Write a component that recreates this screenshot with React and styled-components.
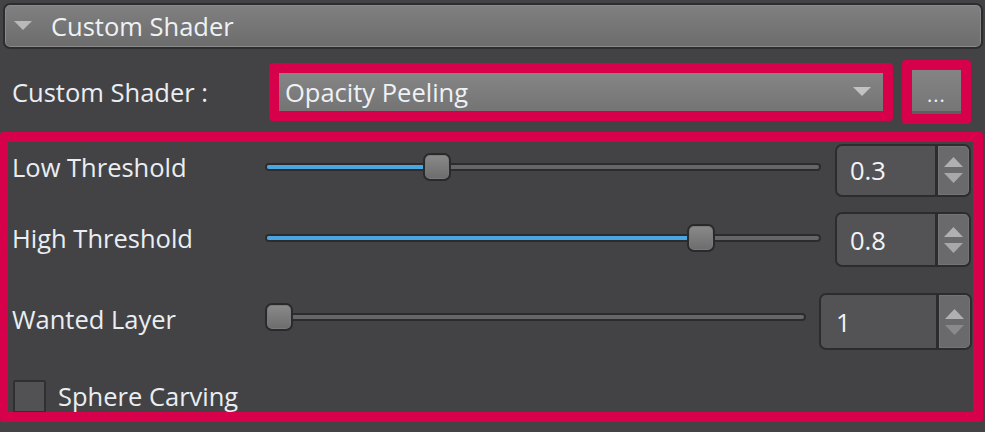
import React from "react";
import styled, { createGlobalStyle } from "styled-components";

const Global = createGlobalStyle`
  html, body { margin: 0; padding: 0; background: #434345; }
  body { width: 985px; height: 432px; overflow: hidden; font-family: "Open Sans", "Noto Sans", sans-serif; }
`;

const Page = styled.div`
  width: 985px;
  height: 432px;
  background: #434345;
  display: flex;
  flex-direction: column;
  box-sizing: border-box;
  padding-top: 3px;
`;

const Header = styled.div`
  margin: 0 2px 0 3px;
  height: 46px;
  box-sizing: border-box;
  border: 2px solid #2d2d2f;
  border-radius: 7px;
  background: linear-gradient(#808080, #6c6c6c);
  box-shadow: inset 0 0 0 1px #8a8a8a;
  display: flex;
  align-items: center;
  padding-left: 9px;
  gap: 19px;
  color: #eef2f6;
  font-size: 25.5px;
`;

const Caret = styled.svg`
  width: 18px;
  height: 10px;
  flex: none;
`;

const ShaderRow = styled.div`
  display: flex;
  align-items: center;
  margin-top: 10px;
  height: 65px;
`;

const Label = styled.div`
  box-sizing: border-box;
  color: #eaeef2;
  font-size: 25.5px;
  white-space: nowrap;
  width: ${(p) => p.$w || "auto"};
  padding-left: ${(p) => p.$pl || 0}px;
  margin-bottom: ${(p) => p.$lift || 0}px;
  flex: none;
`;

const Highlight = styled.div`
  border: 10px solid #d7004b;
  border-radius: 4px;
  display: flex;
  flex: none;
  margin-left: ${(p) => p.$ml || 0}px;
`;

const Combo = styled.div`
  width: 604px;
  height: 38px;
  box-sizing: border-box;
  background: linear-gradient(#858585, #747474);
  display: flex;
  align-items: center;
  justify-content: space-between;
  padding: 0 12px 0 6px;
  color: #eef2f6;
  font-size: 25.5px;
`;

const MoreBtn = styled.div`
  width: 49px;
  height: 44px;
  box-sizing: border-box;
  background: linear-gradient(#848484, #767676);
  border-bottom: 3px solid #5e5e5e;
  display: flex;
  align-items: flex-end;
  justify-content: center;
  padding-bottom: 3px;
  color: #eef2f6;
  font-size: 20px;
  letter-spacing: 1px;
`;

const Group = styled.div`
  margin-top: 8px;
  width: 983px;
  height: 290px;
  box-sizing: border-box;
  border: 10px solid #d7004b;
  border-left-width: 8px;
  border-radius: 3px;
  display: flex;
  flex-direction: column;
  padding: 0 3px 0 4px;
  overflow: hidden;
`;

const ParamRow = styled.div`
  display: flex;
  align-items: center;
  height: ${(p) => p.$h}px;
  flex: none;
`;

const SliderWrap = styled.div`
  position: relative;
  width: ${(p) => p.$w}px;
  height: 28px;
  flex: none;
  margin-right: ${(p) => p.$gap}px;
  margin-bottom: ${(p) => p.$lift || 0}px;
`;

const Track = styled.div`
  position: absolute;
  left: 0;
  right: 0;
  top: 10px;
  height: 8px;
  box-sizing: border-box;
  border: 2px solid #2c2c2e;
  border-radius: 4px;
  background: #666668;
  overflow: hidden;
`;

const Fill = styled.div`
  height: 100%;
  background: #4aa6e0;
`;

const Handle = styled.div`
  position: absolute;
  top: 0;
  width: 28px;
  height: 28px;
  box-sizing: border-box;
  border: 2px solid #2a2a2c;
  border-radius: 7px;
  background: linear-gradient(#8a8a8a, #6c6c6c);
  box-shadow: inset 0 0 0 1px #7a7a7a;
`;

const Spin = styled.div`
  width: ${(p) => p.$w}px;
  height: ${(p) => p.$h}px;
  box-sizing: border-box;
  border: 2px solid #2c2c2e;
  border-radius: 7px;
  background: #535355;
  display: flex;
  overflow: hidden;
  flex: none;
`;

const SpinValue = styled.div`
  flex: 1;
  display: flex;
  align-items: center;
  padding-left: ${(p) => p.$pl}px;
  color: #f2f4f8;
  font-size: 25.5px;
  border-right: 3px solid #2c2c2e;
`;

const SpinButtons = styled.div`
  width: 31px;
  background: #6a6a6c;
  border-radius: 0 5px 5px 0;
  box-shadow: inset 0 0 0 1px #747476;
  display: flex;
  flex-direction: column;
  align-items: center;
  justify-content: center;
  gap: 6px;
`;

const Arrow = styled.svg`
  width: 19px;
  height: 10px;
  display: block;
`;

const CheckRow = styled.div`
  display: flex;
  align-items: flex-start;
  gap: 12px;
  padding-top: 18px;
  padding-left: 1px;
`;

const Box = styled.div`
  width: 33px;
  height: 33px;
  box-sizing: border-box;
  border: 2px solid #303032;
  border-radius: 2px;
  background: #525254;
  flex: none;
`;

const CheckLabel = styled(Label)`
  margin-top: -1px;
`;

function Slider({ width, value, gap, lift }) {
  const left = value * (width - 28);
  return (
    <SliderWrap $w={width} $gap={gap} $lift={lift}>
      <Track>
        <Fill style={{ width: `${left + 14}px` }} />
      </Track>
      <Handle style={{ left: `${left}px` }} />
    </SliderWrap>
  );
}

function SpinBox({ value, w, h, pl, disabled }) {
  const arrowColor = disabled ? "#8a8a8a" : "#a8a8aa";
  return (
    <Spin $w={w} $h={h}>
      <SpinValue $pl={pl}>{value}</SpinValue>
      <SpinButtons>
        <Arrow viewBox="0 0 19 10">
          <polygon points="9.5,0 19,10 0,10" fill="#b0b0b2" />
        </Arrow>
        <Arrow viewBox="0 0 19 10">
          <polygon points="0,0 19,0 9.5,10" fill={arrowColor} />
        </Arrow>
      </SpinButtons>
    </Spin>
  );
}

export default function App() {
  return (
    <Page>
      <Global />
      <Header>
        <Caret viewBox="0 0 18 10">
          <polygon points="0,0 18,0 9,9" fill="#b9b9b9" />
        </Caret>
        Custom Shader
      </Header>
      <ShaderRow>
        <Label $w="269px" $pl={12}>Custom Shader :</Label>
        <Highlight>
          <Combo>
            Opacity Peeling
            <Caret viewBox="0 0 18 10">
              <polygon points="0,0 18,0 9,9" fill="#c2c2c2" />
            </Caret>
          </Combo>
        </Highlight>
        <Highlight $ml={9}>
          <MoreBtn>...</MoreBtn>
        </Highlight>
      </ShaderRow>
      <Group>
        <ParamRow $h={56}>
          <Label $w="253px" $lift={6}>Low Threshold</Label>
          <Slider width={556} value={0.3} gap={14} lift={6} />
          <SpinBox value="0.3" w={136} h={53} pl={13} />
        </ParamRow>
        <ParamRow $h={83}>
          <Label $w="253px" $lift={3}>High Threshold</Label>
          <Slider width={556} value={0.8} gap={14} lift={3} />
          <SpinBox value="0.8" w={136} h={55} pl={13} />
        </ParamRow>
        <ParamRow $h={81}>
          <Label $w="253px" $lift={5}>Wanted Layer</Label>
          <Slider width={541} value={0} gap={13} lift={9} />
          <SpinBox value="1" w={153} h={57} pl={15} disabled />
        </ParamRow>
        <CheckRow>
          <Box />
          <CheckLabel>Sphere Carving</CheckLabel>
        </CheckRow>
      </Group>
    </Page>
  );
}
